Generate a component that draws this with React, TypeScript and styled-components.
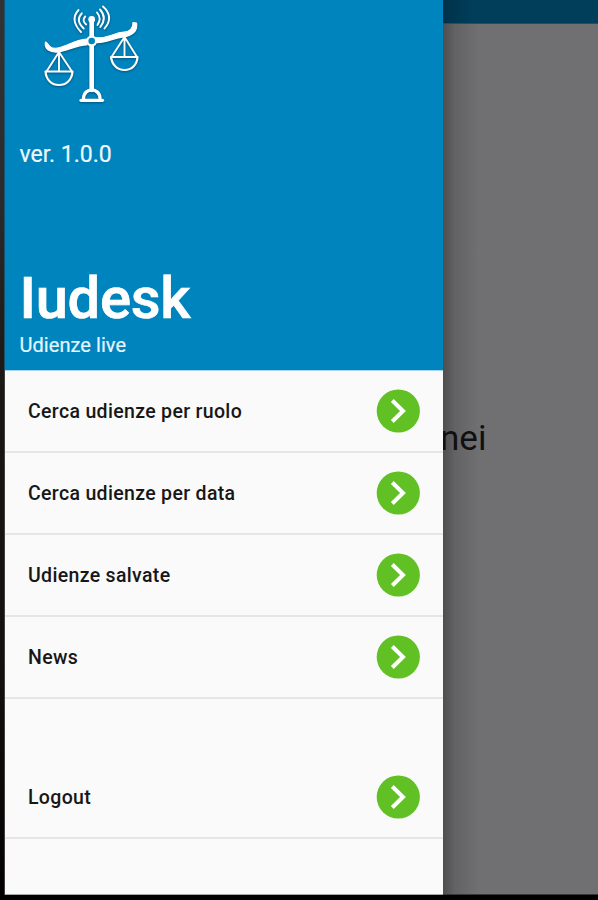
import React from "react";
import styled, { createGlobalStyle } from "styled-components";

const GlobalStyle = createGlobalStyle`
  body { margin: 0; background: #000; }
  * { box-sizing: border-box; }
`;

const Screen = styled.div`
  display: grid;
  grid-template-columns: 5px 438px 1fr;
  width: 598px;
  height: 900px;
  padding-bottom: 5px;
  overflow: hidden;
  background: #000;
  font-family: Roboto, "Liberation Sans", sans-serif;
`;

const Bezel = styled.div`
  background: linear-gradient(#333 0, #2b2b2b 200px, #191614 400px, #15110f 650px, #050505 860px, #000);
  border-style: solid;
  border-width: 0 1px 0 0;
  border-image: linear-gradient(#175270 0 370px, #443f3d 370px) 1;
`;

const Drawer = styled.nav`
  display: flex;
  flex-direction: column;
  min-height: 0;
  background: #fafafa;
  border-bottom: 1px solid #a5a9a7;
`;

const Header = styled.header`
  display: flex;
  flex-direction: column;
  height: 371px;
  flex: none;
  padding-left: 14.5px;
  color: #fff;
  background: #0084be;
  border-bottom: 1px solid #a9d3ea;
`;

const Logo = styled.svg`
  display: block;
  width: 120px;
  height: 110px;
  margin-left: 10.5px;
  filter: drop-shadow(0 1px 1px rgba(0, 45, 75, 0.55));
`;

const Version = styled.div`
  margin-top: 29.5px;
  font-size: 23px;
  line-height: 30px;
  color: #eef9ff;
  -webkit-text-stroke: 0.2px #eef9ff;
`;

const Title = styled.h1`
  margin: 93.5px 0 0;
  font-size: 58px;
  font-weight: 500;
  line-height: 70px;
  letter-spacing: -0.3px;
  -webkit-text-stroke: 0.7px #fff;
`;

const Subtitle = styled.div`
  font-size: 20px;
  line-height: 24px;
  letter-spacing: 0.05px;
  color: #e5f6ff;
  -webkit-text-stroke: 0.2px #e5f6ff;
`;

const Menu = styled.div`
  display: flex;
  flex-direction: column;
`;

const Row = styled.div<{ $gap?: boolean }>`
  display: flex;
  align-items: center;
  justify-content: space-between;
  height: 82.1px;
  margin-top: ${(p) => (p.$gap ? "57.7px" : "0")};
  padding: 0 23px;
  border-bottom: 2px solid #e6e6e6;
  color: #171717;
  font-size: 19.5px;
  font-weight: 500;
  letter-spacing: 0.33px;
`;

const Label = styled.span`
  padding-top: 1px;
`;

const Arrow = styled.svg`
  width: 44px;
  height: 44px;
  flex: none;
`;

const Page = styled.main`
  min-width: 0;
  overflow: hidden;
  background:
    linear-gradient(90deg, rgba(0, 0, 0, 0.3), rgba(0, 0, 0, 0.12) 12px, transparent 36px),
    #707072;
  border-bottom: 1px solid #373939;
`;

const AppBar = styled.div`
  height: 24px;
  background: linear-gradient(90deg, #003249, #003e5a 30px);
  border-bottom: 1px solid #2d4c5b;
`;

const PageText = styled.p`
  margin: 394px 0 0 -3px;
  font-size: 35px;
  line-height: 42px;
  color: #101010;
`;

function ScalesLogo() {
  return (
    <Logo viewBox="0 0 120 110" fill="none" stroke="#fff" strokeLinecap="round" strokeLinejoin="round">
      <g strokeWidth="1.9">
        <path d="M48.5 10Q39.5 20 51 32M51.8 13.3Q45 20.5 53.7 28.5M55.2 16.5Q51.5 20.5 56.2 24.5" />
        <path d="M67 12.5Q72 18.5 67.5 25M70 9.5Q77.5 18 70.3 27M73 6.5Q84.5 17 74.5 28.5" />
      </g>
      <circle cx="61.7" cy="19.5" r="3.4" fill="#fff" stroke="none" />
      <path d="M61.7 20V37M61.7 45V90" strokeWidth="4.6" />
      <path
        d="M15.5 42C17.5 42 19 48 24 48.2C34 49 42 40 57 39.2L57 44.8C46 45.3 38 50.5 29 51.8C20 53 14 49 15.5 42ZM66 37.7C79 38.5 83 33 94 32.2C101 31.8 103 28 103 22.5L106.5 23C108 32 101 36 92 37.2C82 38.5 76 43 66 42.5Z"
        fill="#fff"
        strokeWidth="1.2"
      />
      <circle cx="61.7" cy="41" r="4.4" fill="#0084be" strokeWidth="2.2" />
      <g strokeWidth="1.9">
        <path d="M29 52L16.5 71.5M29 52L42 71.5M29 52V71M94.5 37L81.5 57M94.5 37L107 57M94.5 37V56" />
        <path d="M15.5 71.5H42.5C42 80 36 85 29 85S16 80 15.5 71.5ZM81 57H107.5C107 65 101.5 70 94.5 70S82 65 81 57Z" strokeWidth="2.2" />
      </g>
      <path d="M53.5 98.5C54 87 69.5 87 70 98.5" strokeWidth="3.3" />
      <path d="M51 100.3H72.5" strokeWidth="3.2" />
    </Logo>
  );
}

function ArrowButton() {
  return (
    <Arrow viewBox="0 0 44 44">
      <circle cx="22.3" cy="22" r="21.6" fill="#61c023" />
      <path d="M16.3 11.5L27 22L16.3 32.5" fill="none" stroke="#fff" strokeWidth="4" />
    </Arrow>
  );
}

const items = ["Cerca udienze per ruolo", "Cerca udienze per data", "Udienze salvate", "News", "Logout"];

export default function App() {
  return (
    <>
      <GlobalStyle />
      <Screen>
        <Bezel />
        <Drawer>
          <Header>
            <ScalesLogo />
            <Version>ver. 1.0.0</Version>
            <Title>Iudesk</Title>
            <Subtitle>Udienze live</Subtitle>
          </Header>
          <Menu>
            {items.map((label) => (
              <Row key={label} $gap={label === "Logout"}>
                <Label>{label}</Label>
                <ArrowButton />
              </Row>
            ))}
          </Menu>
        </Drawer>
        <Page>
          <AppBar />
          <PageText>nei</PageText>
        </Page>
      </Screen>
    </>
  );
}
